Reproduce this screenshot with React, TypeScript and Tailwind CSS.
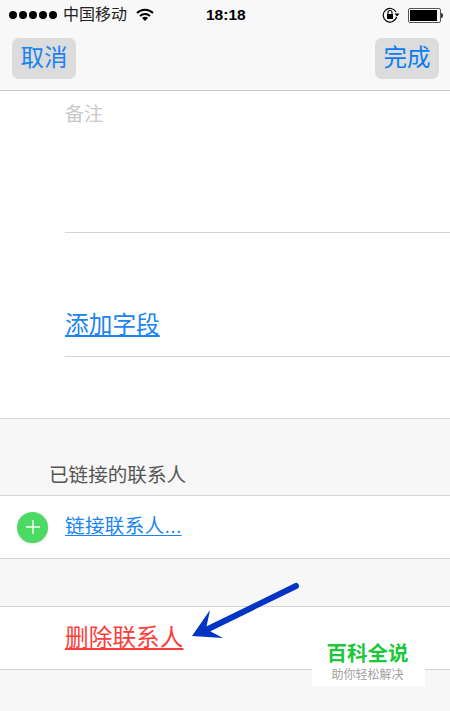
import { Plus } from 'lucide-react';

const CJK = { fontFamily: '"Liberation Sans", "Noto Sans CJK SC", sans-serif' };

function StatusBar() {
  return (
    <div className="relative flex h-[30px] items-center pl-[9px] pr-[7px] text-black">
      <div className="flex gap-[2px]">
        {[0, 1, 2, 3, 4].map((i) => (
          <span key={i} className="h-[8px] w-[8px] rounded-full bg-black" />
        ))}
      </div>
      <span className="ml-[6px] text-[16px] leading-none text-[#222]">中国移动</span>
      {/* wifi */}
      <svg className="ml-[9px]" width="18" height="14" viewBox="0 0 18 14">
        <path d="M1 5 C5.5 0.6 12.5 0.6 17 5" fill="none" stroke="#000" strokeWidth="2" />
        <path d="M4 8 C6.8 5.3 11.2 5.3 14 8" fill="none" stroke="#000" strokeWidth="2" />
        <path d="M6 10 C7.8 8.4 10.2 8.4 12 10 L9 13 Z" fill="#000" />
      </svg>
      <span className="absolute left-[206px] top-[6px] text-[15.5px] font-bold leading-[18px]">18:18</span>
      <div className="ml-auto flex items-center gap-[8px]">
        {/* rotation lock */}
        <svg width="18" height="16" viewBox="0 0 18 16">
          <path d="M14 5 A6.8 6.8 0 1 0 14.6 10" fill="none" stroke="#000" strokeWidth="1.2" />
          <path d="M12.5 6.5 H17.5 L15 9.5 Z" fill="#000" />
          <rect x="5" y="7" width="6" height="5" fill="#000" />
          <path d="M6 7 V5.5 A2 2 0 0 1 10 5.5 V7" fill="none" stroke="#000" strokeWidth="1.1" />
        </svg>
        <div className="flex items-center">
          <div className="h-[15px] w-[33px] rounded-[2px] border border-[#555] p-[1px]">
            <div className="h-full w-[27px] bg-black" />
          </div>
          <div className="h-[5px] w-[2px] rounded-r-sm bg-[#333]" />
        </div>
      </div>
    </div>
  );
}

function NavButton({ label, color }: { label: string; color: string }) {
  return (
    <button className={`flex h-[41px] w-[64px] items-center justify-center rounded-[7px] bg-[#dcdcdc] text-[23.5px] leading-none ${color}`}>
      {label}
    </button>
  );
}

export default function App() {
  return (
    <div className="relative h-[711px] w-[450px] overflow-hidden bg-[#f7f7f7]" style={CJK}>
      <header className="h-[91px] border-b border-[#c8c8c8] bg-[#f8f8f8]">
        <StatusBar />
        <div className="mt-[8px] flex justify-between pl-[12px] pr-[11px]">
          <NavButton label="取消" color="text-[#1a84f0]" />
          <NavButton label="完成" color="text-[#0a7cf0]" />
        </div>
      </header>

      <section className="h-[328px] border-b border-[#d4d4d4] bg-white pl-[65px]">
        <div className="h-[142px] border-b border-[#d4d4d4] pt-[13px]">
          <span className="text-[19px] leading-[22px] text-[#c8c8c8]">备注</span>
        </div>
        <div className="flex h-[124px] items-end border-b border-[#d4d4d4] pb-[17px]">
          <span className="text-[23.7px] leading-[28px] text-[#1a84f0] underline underline-offset-2">添加字段</span>
        </div>
      </section>

      <div className="flex h-[76px] items-end pb-[8px] pl-[49px]">
        <span className="text-[19.6px] leading-[24px] text-[#555]">已链接的联系人</span>
      </div>

      <section className="flex h-[64px] items-center gap-[17px] border-y border-[#d4d4d4] bg-white pl-[17px]">
        <div className="flex h-[31px] w-[31px] items-center justify-center rounded-full bg-[#4cd964] shadow-sm">
          <Plus className="h-[22px] w-[22px] text-white" strokeWidth={1.5} />
        </div>
        <span className="mb-[2px] text-[19.6px] leading-[24px] tracking-[0.3px] text-[#1a84f0] underline underline-offset-2">链接联系人...</span>
      </section>

      <section className="mt-[47px] flex h-[64px] items-center border-y border-[#d4d4d4] bg-white pl-[65px]">
        <span className="text-[23.7px] leading-[28px] text-[#fc3d39] underline underline-offset-2">删除联系人</span>
      </section>

      {/* arrow annotation */}
      <svg className="absolute left-0 top-0" width="450" height="711" viewBox="0 0 450 711">
        <path d="M296 586 L206 630" fill="none" stroke="#0235c4" strokeWidth="6" strokeLinecap="round" />
        <path d="M192 636 L210 610 L206 629 L223 638 Z" fill="#0235c4" />
      </svg>

      {/* watermark */}
      <div className="absolute left-[312px] top-[640px] flex h-[46px] w-[113px] flex-col items-center bg-white pr-[2px]">
        <span className="text-[20.5px] font-bold leading-[28px] text-[#1cc73c]">百科全说</span>
        <span className="text-[12px] leading-[14px] text-[#a0a0a0]">助你轻松解决</span>
      </div>
    </div>
  );
}
